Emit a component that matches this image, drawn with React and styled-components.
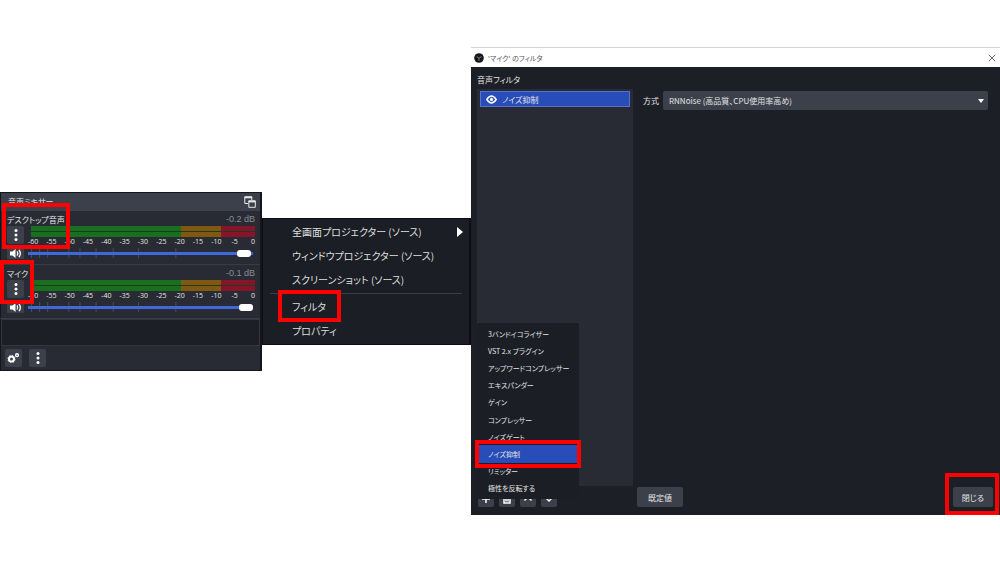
import React from "react";
import styled, { createGlobalStyle } from "styled-components";

const ticks = [-60, -55, -50, -45, -40, -35, -30, -25, -20, -15, -10, -5, 0];
const notches = [31, 39, 47, 68, 79, 95, 112, 137, 174];

const sources = [
    { id: "desktop", name: "デスクトップ音声", level: "-0.2 dB", volume: 99, mark: "desktop" },
    { id: "mic", name: "マイク", level: "-0.1 dB", volume: 100, mark: "mic" },
];

const filterTypes = [
    "3バンドイコライザー",
    "VST 2.x プラグイン",
    "アップワードコンプレッサー",
    "エキスパンダー",
    "ゲイン",
    "コンプレッサー",
    "ノイズゲート",
    "ノイズ抑制",
    "リミッター",
    "極性を反転する",
];

const DotsIcon = () => (
    <svg width="4" height="14" viewBox="0 0 4 14" fill="#fff">
        <circle cx="2" cy="2.5" r="1.5" />
        <circle cx="2" cy="7" r="1.5" />
        <circle cx="2" cy="11.5" r="1.5" />
    </svg>
);

const SpeakerIcon = () => (
    <svg width="14" height="11" viewBox="0 0 14 11" fill="none" stroke="#fff">
        <path d="M1 3.5h2.5L6.5 1v9L3.500 7.500H1z" fill="#fff" stroke="none" />
        <path d="M8 3.400q1.500 2.100 0 4.200M10 1.800q2.600 3.700 0 7.400" strokeWidth="1.3" />
    </svg>
);

const DockIcon = () => (
    <svg width="12" height="12" viewBox="0 0 12 12" fill="none" stroke="#e6e6e6">
        <path d="M4 7.5H.8V1h7v3" />
        <path d="M.5 1.3h7.6" strokeWidth="2" />
        <path d="M4.8 5h6.5v6.3H4.8z" />
        <path d="M4.5 5.4h7" strokeWidth="2" />
    </svg>
);

const GearsIcon = () => (
    <svg width="13" height="12" viewBox="0 0 13 12" fill="none" stroke="#fff">
        <circle cx="4.5" cy="7" r="2.5" strokeWidth="2" />
        <circle cx="4.5" cy="7" r="3.6" strokeWidth="0.8" strokeDasharray="1.4 1.4" />
        <circle cx="10" cy="3.2" r="1.4" strokeWidth="1.4" />
    </svg>
);

const ObsIcon = () => (
    <svg width="10" height="10" viewBox="0 0 10 10">
        <circle cx="5" cy="5" r="4.8" fill="#15161a" />
        <path
            d="M5 5.200L2.600 3.400M5 5.200l2.600-1.600M5 5.200v2.600"
            fill="none"
            stroke="#8d8d92"
            strokeWidth="0.9"
        />
    </svg>
);

const EyeIcon = () => (
    <svg width="11" height="9" viewBox="0 0 11 9" fill="none" stroke="#fff">
        <path d="M.8 4.5Q5.5-2.4 10.2 4.5 5.5 11.4.8 4.5z" strokeWidth="1.4" />
        <circle cx="5.5" cy="4.5" r="1.2" fill="#fff" />
    </svg>
);

const toolPaths = {
    add: "M5 1v8M1 5h8",
    remove: "M1 2.5h8M3.500 2V1h3v1M2 3v6h6V3M4 5v2.500M6 5v2.500",
    up: "M1.500 6.500L5 3l3.500 3.500",
    down: "M1.500 3.500L5 7l3.500-3.500",
};

const ToolIcon = ({ name }) => (
    <svg width="10" height="10" viewBox="0 0 10 10" fill="none" stroke="#fff" strokeWidth="1.5">
        <path d={toolPaths[name]} />
    </svg>
);

const Channel = ({ source }) => (
    <Strip>
        <StripHead>
            <label htmlFor={source.id}>{source.name}</label>
            <Level>{source.level}</Level>
        </StripHead>
        <StripBody>
            <IconButton aria-label={source.name + " メニュー"}>
                <DotsIcon />
            </IconButton>
            <div>
                <Meter role="meter" aria-label={source.name} aria-valuemin={-60} aria-valuemax={0} aria-valuenow={-60}>
                    <MeterBar />
                    <MeterBar />
                </Meter>
                <Scale>
                    {ticks.map((tick) => (
                        <Tick key={tick}>{tick}</Tick>
                    ))}
                </Scale>
            </div>
        </StripBody>
        <VolumeRow>
            <MuteButton aria-label="ミュート">
                <SpeakerIcon />
            </MuteButton>
            <SliderBox>
                <Notches viewBox="0 0 223 10" preserveAspectRatio="none">
                    {notches.map((x) => (
                        <path key={x} d={`M${x - 28 + 0.5} 0v10`} />
                    ))}
                </Notches>
                <Slider id={source.id} type="range" min="0" max="100" defaultValue={source.volume} />
            </SliderBox>
        </VolumeRow>
        <Mark $area={source.mark} />
    </Strip>
);

const Mixer = () => (
    <MixerPanel>
        <MixerTitle>
            音声ミキサー
            <PlainButton aria-label="切り離す">
                <DockIcon />
            </PlainButton>
        </MixerTitle>
        {sources.map((source) => (
            <Channel key={source.id} source={source} />
        ))}
        <MixerEmpty />
        <MixerTools>
            <IconButton aria-label="設定">
                <GearsIcon />
            </IconButton>
            <IconButton aria-label="その他">
                <DotsIcon />
            </IconButton>
        </MixerTools>
    </MixerPanel>
);

const SourceMenu = () => (
    <Menu>
        <MenuItem>
            全画面プロジェクター (ソース)
            <MenuArrow viewBox="0 0 6 10">
                <path d="M0 0l6 5-6 5z" />
            </MenuArrow>
        </MenuItem>
        <MenuItem>ウィンドウプロジェクター (ソース)</MenuItem>
        <MenuItem>スクリーンショット (ソース)</MenuItem>
        <MenuLine />
        <MenuItem>
            フィルタ
            <Mark $area="filter" />
        </MenuItem>
        <MenuItem>プロパティ</MenuItem>
    </Menu>
);

const FilterDialog = () => (
    <Dialog>
        <TitleBar>
            <ObsIcon />
            <TitleText>'マイク' のフィルタ</TitleText>
            <PlainButton aria-label="ウィンドウを閉じる">
                <svg width="8" height="8" viewBox="0 0 8 8" stroke="#666" strokeWidth="1">
                    <path d="M.8.8l6.400 6.400M7.200.8L.8 7.200" />
                </svg>
            </PlainButton>
        </TitleBar>
        <DialogBody>
            <Heading>音声フィルタ</Heading>
            <Columns>
                <FilterList>
                    <FilterRow>
                        <EyeIcon />
                        ノイズ抑制
                    </FilterRow>
                </FilterList>
                <Settings>
                    <label htmlFor="method">方式</label>
                    <SelectBox>
                        <Select id="method">
                            <option>RNNoise (高品質、CPU使用率高め)</option>
                        </Select>
                        <SelectArrow viewBox="0 0 6 4">
                            <path d="M0 0h6L3 4z" />
                        </SelectArrow>
                    </SelectBox>
                </Settings>
            </Columns>
            <Footer>
                <ListTools>
                    <ToolButton aria-label="追加">
                        <ToolIcon name="add" />
                    </ToolButton>
                    <ToolButton aria-label="削除">
                        <ToolIcon name="remove" />
                    </ToolButton>
                    <ToolButton aria-label="上へ">
                        <ToolIcon name="up" />
                    </ToolButton>
                    <ToolButton aria-label="下へ">
                        <ToolIcon name="down" />
                    </ToolButton>
                    <Popup>
                        {filterTypes.map((type) => (
                            <PopupItem key={type} $active={type === "ノイズ抑制"}>
                                {type}
                                {type === "ノイズ抑制" && <Mark $area="noise" />}
                            </PopupItem>
                        ))}
                    </Popup>
                </ListTools>
                <Button>既定値</Button>
                <Button $end>
                    閉じる
                    <Mark $area="close" />
                </Button>
            </Footer>
        </DialogBody>
    </Dialog>
);

const App = () => {
    return (
        <Page>
            <GlobalStyle />
            <Mixer />
            <SourceMenu />
            <FilterDialog />
        </Page>
    );
};

const GlobalStyle = createGlobalStyle`
    * {
        box-sizing: border-box;
    }

    body {
        margin: 0;
        background: #fff;
        font-family: "Noto Sans CJK JP", sans-serif;
        font-feature-settings: "palt";
    }

    svg {
        display: block;
        flex: none;
    }

    button,
    select {
        font: inherit;
        font-feature-settings: inherit;
        color: inherit;
        border: 0;
        padding: 0;
    }
`;

const Page = styled.main`
    display: grid;
    grid-template-columns: 262fr 209fr 529fr;
    align-items: center;
    min-height: 100vh;
`;

const markAreas = {
    desktop: "top: -8px; left: 2px; width: 68px; height: 46px;",
    mic: "top: -5px; left: 0; width: 34px; height: 44px;",
    filter: "top: -5px; left: 12px; width: 63px; height: 32px;",
    noise: "inset: -5px -4px;",
    close: "inset: -14px -6px -8px -8px;",
};

const Mark = styled.span`
    position: absolute;
    z-index: 2;
    border: 4px solid #fe0000;
    pointer-events: none;
    ${({ $area }) => markAreas[$area]}
`;

const PlainButton = styled.button`
    background: none;
    cursor: pointer;
`;

const MixerPanel = styled.section`
    background: #292b34;
    color: #e4e4e6;
    border: solid #15161b;
    border-width: 1px 2px 1px 1px;
    font-size: 8px;
`;

const MixerTitle = styled.header`
    display: flex;
    align-items: center;
    justify-content: space-between;
    height: 18px;
    padding: 0 4px 0 7px;
    background: #3c404b;
`;

const Strip = styled.div`
    position: relative;
    height: 54px;
    margin-left: -1px;
    padding: 2px 5px 0 7px;
    border-bottom: 1px solid #3a3c45;
`;

const StripHead = styled.div`
    display: flex;
    justify-content: space-between;
    height: 13px;
    line-height: 13px;
`;

const Level = styled.span`
    font-family: "Liberation Sans", sans-serif;
    font-size: 9px;
    color: #8a8b91;
`;

const StripBody = styled.div`
    display: grid;
    grid-template-columns: 17px 1fr;
    gap: 7px;
    height: 21px;
`;

const IconButton = styled.button`
    display: flex;
    align-items: center;
    justify-content: center;
    width: 17px;
    height: 18px;
    background: #3c404b;
    border-radius: 2px;
    cursor: pointer;
`;

const Meter = styled.div`
    display: grid;
    gap: 1px;
    height: 11px;
    background: #1d3a22;
`;

const MeterBar = styled.div`
    background: linear-gradient(to right, #18701f 67%, #80580f 67% 85%, #86152a 85%);
`;

const Scale = styled.div`
    display: flex;
    justify-content: space-between;
    padding: 0 2px;
    font-family: "Open Sans", sans-serif;
    font-size: 7px;
    line-height: 9px;
`;

const Tick = styled.span`
    display: flex;
    justify-content: center;
    width: 0;
`;

const VolumeRow = styled.div`
    display: grid;
    grid-template-columns: 17px 1fr;
    gap: 4px;
    align-items: center;
    height: 13px;
    padding-right: 2px;
`;

const MuteButton = styled.button`
    display: flex;
    align-items: center;
    justify-content: center;
    height: 12px;
    background: #3c404b;
    cursor: pointer;
`;

const SliderBox = styled.div`
    display: grid;
    align-items: center;

    > * {
        grid-area: 1 / 1;
    }
`;

const Notches = styled.svg`
    width: 100%;
    height: 10px;
    stroke: #484b57;
`;

const Slider = styled.input`
    appearance: none;
    width: 100%;
    height: 8px;
    margin: 0;
    background: linear-gradient(#3f68d8, #3f68d8) center / 100% 3px no-repeat;

    &::-webkit-slider-thumb {
        appearance: none;
        width: 14px;
        height: 7px;
        background: #fff;
        border-radius: 3px;
    }
`;

const MixerEmpty = styled.div`
    height: 27px;
    background: #1d1f26;
    border: 1px solid #34363f;
`;

const MixerTools = styled.footer`
    display: flex;
    gap: 7px;
    padding: 3px 4px;
`;

const Menu = styled.ul`
    margin: 0;
    padding: 1px 3px;
    list-style: none;
    background: #1c1e25;
    border: solid #0d0d14;
    border-width: 1px 2px 1px 1px;
    color: #dededf;
    font-size: 10px;
`;

const MenuItem = styled.li`
    position: relative;
    display: flex;
    align-items: center;
    justify-content: space-between;
    height: 24px;
    padding: 0 3px 0 26px;
    white-space: nowrap;
`;

const MenuArrow = styled.svg`
    width: 6px;
    height: 10px;
    fill: #fff;
`;

const MenuLine = styled.li`
    height: 1px;
    margin: 1px 4px;
    background: #3b3d45;
`;

const Dialog = styled.section`
    color: #e4e4e6;
    background: #1d1f26;
    font-size: 8px;
`;

const TitleBar = styled.header`
    display: flex;
    align-items: center;
    gap: 4px;
    height: 20px;
    padding: 0 4px 0 3px;
    background: #fff;
    color: #555;
    border-top: 1px solid #d5d5d5;
`;

const TitleText = styled.span`
    flex: 1;
    font-size: 7px;
`;

const DialogBody = styled.div`
    padding: 4px 7px 8px 6px;
`;

const Heading = styled.h2`
    margin: 0;
    font-size: 8px;
    font-weight: 400;
    line-height: 18px;
`;

const Columns = styled.div`
    display: grid;
    grid-template-columns: 156px 1fr;
    gap: 10px;
`;

const FilterList = styled.ul`
    min-height: 397px;
    margin: 0;
    padding: 2px 3px;
    list-style: none;
    background: #292b34;
`;

const FilterRow = styled.li`
    display: flex;
    align-items: center;
    gap: 5px;
    height: 16px;
    padding: 0 5px;
    background: #284cb8;
    border: 1px solid #5573cc;
`;

const Settings = styled.div`
    display: grid;
    grid-template-columns: auto 1fr;
    align-items: center;
    align-content: start;
    gap: 4px;
    padding: 2px 5px 0 0;
`;

const SelectBox = styled.div`
    display: grid;
    align-items: center;

    > * {
        grid-area: 1 / 1;
    }
`;

const Select = styled.select`
    appearance: none;
    width: 100%;
    height: 19px;
    padding: 0 6px;
    background: #3c404b;
    border-radius: 2px;
`;

const SelectArrow = styled.svg`
    justify-self: end;
    width: 6px;
    height: 4px;
    margin-right: 4px;
    fill: #fff;
    pointer-events: none;
`;

const Footer = styled.footer`
    display: grid;
    grid-template-columns: 156px auto 1fr;
    gap: 4px;
    padding-top: 1px;
`;

const ListTools = styled.div`
    position: relative;
    display: flex;
    align-items: flex-end;
    gap: 5px;
    padding-left: 1px;
`;

const ToolButton = styled.button`
    display: flex;
    align-items: center;
    justify-content: center;
    width: 16px;
    height: 17px;
    background: #3c404b;
    border-radius: 2px;
    cursor: pointer;
`;

const Popup = styled.ul`
    position: absolute;
    left: 0;
    bottom: 8px;
    display: grid;
    grid-auto-rows: 1fr;
    width: 102px;
    height: 176px;
    margin: 0;
    padding: 2px;
    list-style: none;
    background: #1c1e25;
    border-radius: 2px;
    font-size: 7px;
`;

const PopupItem = styled.li`
    position: relative;
    display: flex;
    align-items: center;
    padding-left: 9px;
    white-space: nowrap;
    background: ${({ $active }) => ($active ? "#284cb8" : "transparent")};
`;

const Button = styled.button`
    position: relative;
    justify-self: ${({ $end }) => ($end ? "end" : "start")};
    height: 20px;
    padding: 0 ${({ $end }) => ($end ? "9px" : "11px")};
    background: #3c404b;
    border-radius: 2px;
    cursor: pointer;
`;

export default App;
